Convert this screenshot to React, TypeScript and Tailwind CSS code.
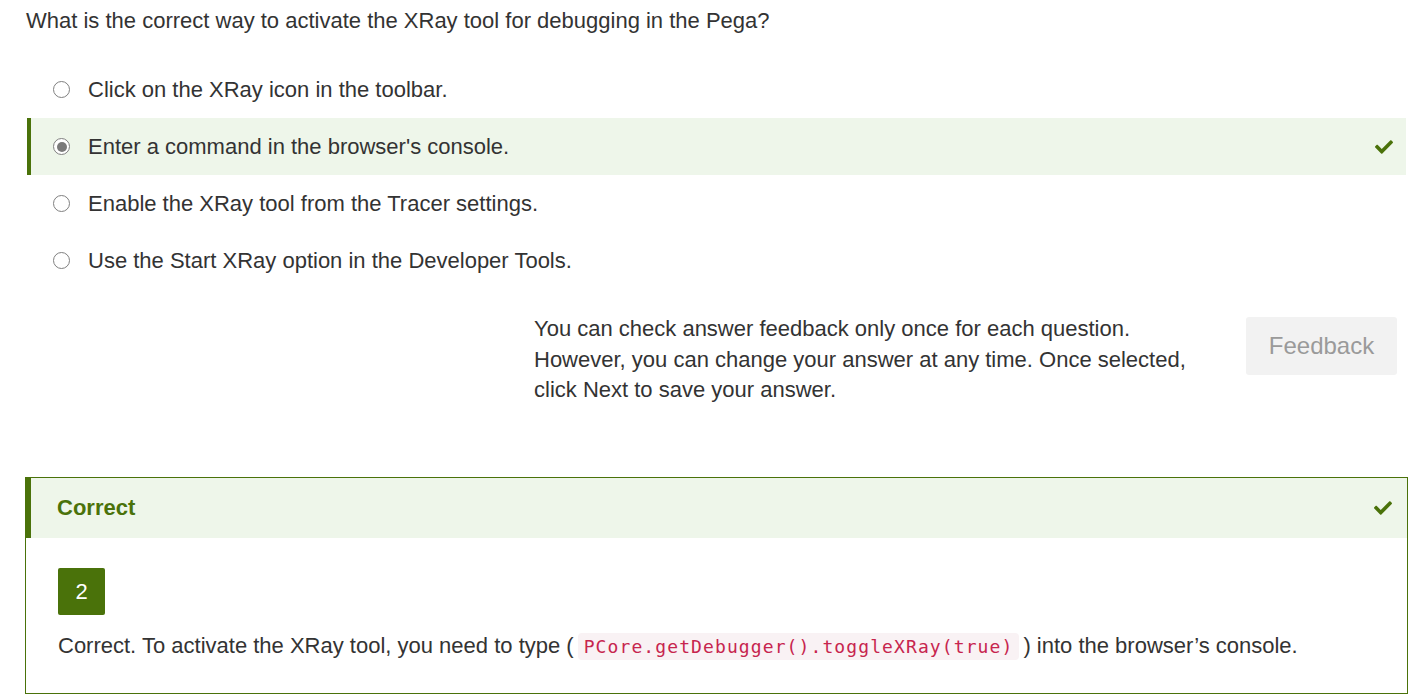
import { FaCheck } from "react-icons/fa";

const options = [
  "Click on the XRay icon in the toolbar.",
  "Enter a command in the browser's console.",
  "Enable the XRay tool from the Tracer settings.",
  "Use the Start XRay option in the Developer Tools.",
];

const SELECTED = 1;

function Radio({ checked }: { checked: boolean }) {
  return (
    <span className="flex h-[17px] w-[17px] shrink-0 items-center justify-center rounded-full border border-[#808080] bg-white">
      {checked && <span className="h-[10px] w-[10px] rounded-full bg-[#7a7a7a]" />}
    </span>
  );
}

export default function App() {
  return (
    <div className="min-h-screen bg-white pl-[26px] pr-[20px] text-[#333] [font-family:'Liberation_Sans',Arial,sans-serif]">
      <p className="pt-[7px] text-[22px] leading-[28px]">
        What is the correct way to activate the XRay tool for debugging in the Pega?
      </p>

      {/* Answer options */}
      <div className="mt-[26px] ml-[1px] w-[1379px]">
        {options.map((o, i) => {
          const sel = i === SELECTED;
          return (
            <div
              key={o}
              className={`flex h-[57px] items-center gap-[18px] pr-[13px] ${
                sel ? "border-l-[4px] border-[#4a720a] bg-[#eef6ea] pl-[22px]" : "pl-[26px]"
              }`}
            >
              <Radio checked={sel} />
              <span className="flex-1 text-[22px]">{o}</span>
              {sel && <FaCheck className="text-[18px] text-[#4a720a]" />}
            </div>
          );
        })}
      </div>

      {/* Feedback note */}
      <div className="mt-[25px] flex w-[1371px] items-start justify-end gap-[52px]">
        <p className="w-[660px] text-[22px] leading-[30.5px]">
          You can check answer feedback only once for each question. However, you can change your answer at any
          time. Once selected, click Next to save your answer.
        </p>
        <button className="mt-[3px] h-[58px] w-[151px] rounded-[3px] bg-[#f2f2f2] text-[24px] text-[#9a9a9a]">
          Feedback
        </button>
      </div>

      {/* Result panel */}
      <div className="mt-[71px] w-[1383px] -ml-[1px] border border-[#4a720a]">
        <div className="flex h-[60px] items-center border-l-[5px] border-[#4a720a] bg-[#eef6ea] pl-[26px] pr-[15px]">
          <span className="flex-1 text-[22px] font-bold text-[#4a720a]">Correct</span>
          <FaCheck className="text-[18px] text-[#4a720a]" />
        </div>
        <div className="px-[32px] pt-[30px] pb-[32px]">
          <div className="flex h-[47px] w-[47px] items-center justify-center rounded-[2px] bg-[#4a720a] text-[22px] text-white">
            2
          </div>
          <p className="mt-[17px] text-[22px] leading-[28px]">
            Correct. To activate the XRay tool, you need to type (
            <code className="mx-[4px] rounded-[4px] bg-[#f9f2f4] px-[6px] py-[3px] text-[18px] tracking-[1.1px] text-[#c7254e] [font-family:'DejaVu_Sans_Mono',monospace]">
              PCore.getDebugger().toggleXRay(true)
            </code>
            ) into the browser’s console.
          </p>
        </div>
      </div>
    </div>
  );
}
